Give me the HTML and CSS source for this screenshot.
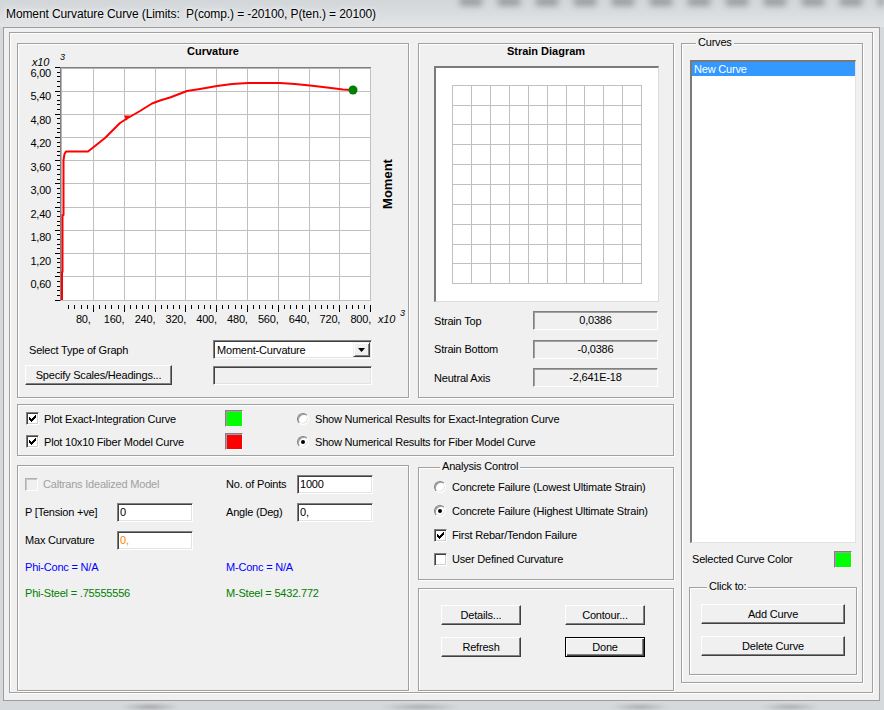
FILE: index.html
```html
<!DOCTYPE html>
<html>
<head>
<meta charset="utf-8">
<title>Moment Curvature Curve</title>
<link rel="stylesheet" href="styles.css">
</head>
<body>
<div class="titlebar"><span class="title-text">Moment Curvature Curve (Limits:  P(comp.) = -20100, P(ten.) = 20100)</span></div>
<div class="window">
  <div class="frame">
    <div class="leftcol">
      <div class="row1">
        <section class="panel curv">
          <div class="ptitle">Curvature</div>
          <svg class="chart" width="390" height="274" viewBox="18 59 390 274">
            <rect x="60" y="67" width="311" height="234" fill="#fff"/>
            <path d="M93.5 68V301M124.5 68V301M155.5 68V301M185.5 68V301M216.5 68V301M247.5 68V301M278.5 68V301M309.5 68V301M339.5 68V301M60 91.5H371M60 114.5H371M60 137.5H371M60 160.5H371M60 183.5H371M60 207.5H371M60 230.5H371M60 253.5H371M60 276.5H371M370.5 67V301M60 300.5H371" stroke="#c0c0c0" stroke-width="1" fill="none"/>
            <path d="M60 67.5H371M60.5 67V301" stroke="#808080" stroke-width="1" fill="none"/>
            <path d="M61 68.5H370M61.5 68V300" stroke="#b4b4b4" stroke-width="1" fill="none"/>
            <path d="M57 295.5h3M57 290.5h3M57 286.5h3M57 281.5h3M57 272.5h3M57 267.5h3M57 262.5h3M57 258.5h3M57 248.5h3M57 244.5h3M57 239.5h3M57 234.5h3M57 225.5h3M57 221.5h3M57 216.5h3M57 211.5h3M57 202.5h3M57 197.5h3M57 193.5h3M57 188.5h3M57 179.5h3M57 174.5h3M57 169.5h3M57 165.5h3M57 155.5h3M57 151.5h3M57 146.5h3M57 142.5h3M57 132.5h3M57 128.5h3M57 123.5h3M57 118.5h3M57 109.5h3M57 104.5h3M57 100.5h3M57 95.5h3M57 86.5h3M57 81.5h3M57 76.5h3M57 72.5h3M55 276.5h5M55 253.5h5M55 230.5h5M55 207.5h5M55 183.5h5M55 160.5h5M55 137.5h5M55 114.5h5M55 91.5h5M55 67.5h5M55 300.5h5" stroke="#000" stroke-width="1" fill="none"/>
            <path d="M68.5 305v4M74.5 305v4M81.5 305v4M87.5 305v4M99.5 305v4M105.5 305v4M111.5 305v4M118.5 305v4M130.5 305v4M136.5 305v4M142.5 305v4M148.5 305v4M161.5 305v4M167.5 305v4M173.5 305v4M179.5 305v4M191.5 305v4M198.5 305v4M204.5 305v4M210.5 305v4M222.5 305v4M228.5 305v4M235.5 305v4M241.5 305v4M253.5 305v4M259.5 305v4M265.5 305v4M272.5 305v4M284.5 305v4M290.5 305v4M296.5 305v4M302.5 305v4M315.5 305v4M321.5 305v4M327.5 305v4M333.5 305v4M346.5 305v4M352.5 305v4M358.5 305v4M364.5 305v4M93.5 305v7M124.5 305v7M155.5 305v7M185.5 305v7M216.5 305v7M247.5 305v7M278.5 305v7M309.5 305v7M339.5 305v7M370.5 305v7" stroke="#000" stroke-width="1" fill="none"/>
            <g class="ylab" text-anchor="end">
              <text x="51" y="77">6,00</text>
              <text x="51" y="100">5,40</text>
              <text x="51" y="124">4,80</text>
              <text x="51" y="147">4,20</text>
              <text x="51" y="171">3,60</text>
              <text x="51" y="194">3,00</text>
              <text x="51" y="218">2,40</text>
              <text x="51" y="241">1,80</text>
              <text x="51" y="265">1,20</text>
              <text x="51" y="288">0,60</text>
            </g>
            <g class="xlab" text-anchor="middle">
              <text x="83.3" y="323">80,</text>
              <text x="114.1" y="323">160,</text>
              <text x="145" y="323">240,</text>
              <text x="175.8" y="323">320,</text>
              <text x="206.6" y="323">400,</text>
              <text x="237.4" y="323">480,</text>
              <text x="268.2" y="323">560,</text>
              <text x="299.1" y="323">640,</text>
              <text x="329.9" y="323">720,</text>
              <text x="360.7" y="323">800,</text>
            </g>
            <text class="exp" x="32" y="66">x10</text>
            <text class="exp sup" x="60" y="60">3</text>
            <text class="exp" x="378" y="323">x10</text>
            <text class="exp sup" x="400" y="316">3</text>
            <text class="axis-title" x="392" y="184" text-anchor="middle" transform="rotate(-90 392 184)">Moment</text>
            <polyline points="62,300 62,272 62.5,272 62.5,215 63.5,215 63.5,160 64.5,154 66,151.5 88,151.5 95,146 105,138 113,130 120,123 127,118.5 140,111 152,103.5 160,100.5 170,97.5 187,91 200,89 217,86 232,84 248,83 280,83 295,84 310,85.5 327,87.5 343,89.5 352,90" fill="none" stroke="#ff0000" stroke-width="2" stroke-linejoin="round"/>
            <polygon points="124,115.5 130,115.5 126.5,120.5" fill="#ff0000"/>
            <circle cx="353" cy="90" r="4.5" fill="#008000"/>
          </svg>
          <div class="selrow">
            <span class="sel-label">Select Type of Graph</span>
            <div class="combo"><span class="combo-text">Moment-Curvature</span><span class="combo-btn"><svg width="7" height="4" viewBox="0 0 7 4"><path d="M0 0H7L3.5 4Z" fill="#000"/></svg></span></div>
          </div>
          <div class="scalerow">
            <button class="btn scale-btn">Specify Scales/Headings...</button>
            <div class="edit disabled"></div>
          </div>
        </section>
        <section class="panel strain">
          <div class="ptitle">Strain Diagram</div>
          <div class="strain-box">
            <svg width="222" height="233" viewBox="436 68 222 233">
              <path d="M452.5 85V284M471.5 85V284M490.5 85V284M509.5 85V284M528.5 85V284M547.5 85V284M566.5 85V284M584.5 85V284M603.5 85V284M622.5 85V284M641.5 85V284M452 85.5H642M452 105.5H642M452 124.5H642M452 144.5H642M452 164.5H642M452 184.5H642M452 204.5H642M452 224.5H642M452 244.5H642M452 263.5H642M452 283.5H642" stroke="#c0c0c0" stroke-width="1" fill="none"/>
            </svg>
          </div>
          <div class="srow first"><span class="slabel">Strain Top</span><div class="valbox">0,0386</div></div>
          <div class="srow"><span class="slabel">Strain Bottom</span><div class="valbox">-0,0386</div></div>
          <div class="srow"><span class="slabel">Neutral Axis</span><div class="valbox">-2,641E-18</div></div>
        </section>
      </div>
      <section class="panel plotopts">
        <label class="opt"><span class="cb"><svg width="7" height="7" viewBox="0 0 7 7"><path d="M0 2H1V3H2V4H3V3H4V2H5V1H6V0H7V3H6V4H5V5H4V6H3V7H2V6H1V5H0Z" fill="#000"/></svg></span><span>Plot Exact-Integration Curve</span></label>
        <span class="swatch sw-green"></span>
        <label class="opt"><span class="rb"></span><span>Show Numerical Results for Exact-Integration Curve</span></label>
        <label class="opt"><span class="cb"><svg width="7" height="7" viewBox="0 0 7 7"><path d="M0 2H1V3H2V4H3V3H4V2H5V1H6V0H7V3H6V4H5V5H4V6H3V7H2V6H1V5H0Z" fill="#000"/></svg></span><span>Plot 10x10 Fiber Model Curve</span></label>
        <span class="swatch sw-red"></span>
        <label class="opt"><span class="rb on"></span><span>Show Numerical Results for Fiber Model Curve</span></label>
      </section>
      <div class="row3">
        <section class="panel params">
          <label class="opt span3 dis-text"><span class="cb dis"></span><span>Caltrans Idealized Model</span></label>
          <span>No. of Points</span>
          <input class="edit" type="text" value="1000">
          <span>P [Tension +ve]</span>
          <input class="edit" type="text" value="0">
          <span></span>
          <span>Angle (Deg)</span>
          <input class="edit" type="text" value="0,">
          <span>Max Curvature</span>
          <input class="edit orange" type="text" value="0,">
          <span class="span3"></span>
          <span class="blue span3">Phi-Conc = N/A</span>
          <span class="blue span2">M-Conc = N/A</span>
          <span class="green span3">Phi-Steel = .75555556</span>
          <span class="green span2">M-Steel = 5432.772</span>
        </section>
        <div class="rcol">
          <div class="group analysis">
            <div class="cap">Analysis Control</div>
            <label class="aitem first"><span class="rb"></span><span>Concrete Failure (Lowest Ultimate Strain)</span></label>
            <label class="aitem"><span class="rb on"></span><span>Concrete Failure (Highest Ultimate Strain)</span></label>
            <label class="aitem"><span class="cb"><svg width="7" height="7" viewBox="0 0 7 7"><path d="M0 2H1V3H2V4H3V3H4V2H5V1H6V0H7V3H6V4H5V5H4V6H3V7H2V6H1V5H0Z" fill="#000"/></svg></span><span>First Rebar/Tendon Failure</span></label>
            <label class="aitem"><span class="cb"></span><span>User Defined Curvature</span></label>
          </div>
          <section class="panel buttons">
            <button class="btn">Details...</button>
            <button class="btn">Contour...</button>
            <button class="btn">Refresh</button>
            <button class="btn default">Done</button>
          </section>
        </div>
      </div>
    </div>
    <div class="group curves">
      <div class="cap">Curves</div>
      <div class="listbox"><div class="sel-item">New Curve</div></div>
      <div class="colorrow"><span>Selected Curve Color</span><span class="swatch sw-green"></span></div>
      <div class="group clickgroup">
        <div class="cap">Click to:</div>
        <button class="btn wide first">Add Curve</button>
        <button class="btn wide">Delete Curve</button>
      </div>
    </div>
  </div>
</div>
</body>
</html>
```
FILE: styles.css
```css
* { box-sizing: border-box; }
html, body { margin: 0; }
body {
  width: 884px;
  height: 710px;
  overflow: hidden;
  position: relative;
  background: #d6d9dc;
  font-family: "Liberation Sans", Arial, sans-serif;
  font-size: 11px;
  letter-spacing: -0.2px;
  color: #000;
}
body::after {
  content: "";
  position: absolute;
  left: 0;
  right: 0;
  top: 702px;
  height: 8px;
  background:
    radial-gradient(ellipse 30px 4px at 150px 5px, rgba(60,60,60,.35), transparent),
    radial-gradient(ellipse 40px 4px at 420px 5px, rgba(60,60,60,.3), transparent),
    radial-gradient(ellipse 30px 4px at 640px 5px, rgba(60,60,60,.3), transparent),
    radial-gradient(ellipse 30px 4px at 790px 5px, rgba(60,60,60,.3), transparent);
  filter: blur(1.5px);
}
.titlebar {
  height: 27px;
  display: flex;
  align-items: center;
  padding-left: 6px;
  background: linear-gradient(#d2d6d9, #e2e4e6);
  position: relative;
  overflow: hidden;
}
.titlebar::before {
  content: "";
  position: absolute;
  left: 460px;
  right: 0;
  top: -3px;
  height: 9px;
  background: repeating-linear-gradient(90deg, rgba(70,70,70,.4) 0 22px, transparent 22px 38px);
  filter: blur(3px);
}
.title-text {
  position: relative;
  font-size: 12px;
  letter-spacing: -0.1px;
  white-space: pre;
  text-shadow: 0 0 7px rgba(255,255,255,.95), 0 0 3px rgba(255,255,255,.8);
}
.window {
  margin-left: 3px;
  width: 877px;
  height: 674px;
  border: 1px solid #9d9d9d;
  background: #f0f0f0;
  padding: 4px 0 0 5px;
}
.frame {
  width: 864px;
  height: 661px;
  border: 1px solid #a0a0a0;
  box-shadow: inset 1px 1px 0 #fff, 1px 1px 0 #fff;
  display: flex;
  gap: 7px;
  padding: 10px 0 0 7px;
}
.leftcol {
  width: 657px;
  display: flex;
  flex-direction: column;
}
.row1 {
  display: flex;
  gap: 9px;
  height: 355px;
}
.panel {
  border: 1px solid #a0a0a0;
  box-shadow: 1px 1px 0 #fff, inset 1px 1px 0 #fff;
  background: #f0f0f0;
  overflow: hidden;
}
.group {
  border: 1px solid #a0a0a0;
  box-shadow: 1px 1px 0 #fff, inset 1px 1px 0 #fff;
}
.cap {
  width: max-content;
  height: 13px;
  line-height: 13px;
  margin: -8px 0 0 6px;
  padding: 0 2px;
  background: #f0f0f0;
}
.curv { width: 392px; }
.strain { width: 256px; }
.ptitle {
  height: 15px;
  line-height: 15px;
  text-align: center;
  font-weight: bold;
  letter-spacing: 0;
}
.chart { display: block; overflow: visible; }
.chart text { font-size: 11px; }
.chart .exp { font-style: italic; font-size: 11px; }
.chart .sup { font-size: 9px; }
.chart .axis-title { font-weight: bold; font-size: 13px; letter-spacing: 0; }
.selrow, .scalerow {
  display: grid;
  grid-template-columns: 195px 159px;
  align-items: center;
}
.selrow { height: 19px; margin-top: 7px; }
.scalerow { height: 20px; margin-top: 6px; }
.sel-label { padding-left: 11px; }
.combo {
  height: 19px;
  background: #fff;
  border: 1px solid;
  border-color: #808080 #fff #fff #808080;
  box-shadow: inset 1px 1px 0 #404040, inset -1px -1px 0 #e3e3e3;
  display: flex;
  align-items: center;
  padding: 0 1px 0 3px;
}
.combo-text { flex: 1; }
.combo-btn {
  width: 17px;
  height: 15px;
  background: #f0f0f0;
  border: 1px solid;
  border-color: #f0f0f0 #404040 #404040 #f0f0f0;
  box-shadow: inset 1px 1px 0 #fff, inset -1px -1px 0 #808080;
  display: flex;
  align-items: center;
  justify-content: center;
}
.combo-btn svg { display: block; }
.btn {
  font: inherit;
  letter-spacing: inherit;
  color: #000;
  background: #f0f0f0;
  border: 1px solid;
  border-color: #fff #404040 #404040 #fff;
  box-shadow: inset -1px -1px 0 #808080;
  padding: 0;
  height: 20px;
  border-radius: 0;
}
.btn.default {
  border-color: #000;
  box-shadow: inset 1px 1px 0 #fff, inset -1px -1px 0 #404040, inset -2px -2px 0 #808080;
}
.scale-btn { margin-left: 7px; width: 147px; }
.edit {
  font: inherit;
  letter-spacing: inherit;
  color: #000;
  height: 19px;
  width: 76px;
  padding: 0 0 0 2px;
  margin: 0;
  border: 1px solid;
  border-color: #808080 #fff #fff #808080;
  box-shadow: inset 1px 1px 0 #404040, inset -1px -1px 0 #e3e3e3;
  background: #fff;
  outline: none;
}
.edit.disabled { width: 159px; background: #f0f0f0; }
.edit.orange { color: #ff8000; }
.strain-box {
  margin: 7px 0 0 15px;
  width: 225px;
  height: 236px;
  border-style: solid;
  border-width: 2px 1px 1px 2px;
  border-color: #7a7a7a #dcdcdc #dcdcdc #7a7a7a;
  background: #fff;
}
.strain-box svg { display: block; }
.srow {
  display: flex;
  align-items: center;
  height: 19px;
  margin: 9.5px 0 0 15px;
}
.srow.first { margin-top: 9px; }
.slabel { width: 99px; }
.valbox {
  width: 125px;
  height: 19px;
  line-height: 16px;
  text-align: center;
  border: 1px solid;
  border-color: #808080 #fff #fff #808080;
  box-shadow: inset 1px 1px 0 #a0a0a0;
  background: #f0f0f0;
}
.plotopts {
  height: 52px;
  margin-top: 6px;
  display: grid;
  grid-template-columns: 199px 72px 1fr;
  grid-auto-rows: 23px;
  align-items: center;
  padding: 2px 0 0 8px;
}
.opt { display: flex; align-items: center; }
.cb {
  flex: none;
  width: 13px;
  height: 13px;
  margin-right: 5px;
  background: #fff;
  border: 1px solid;
  border-color: #808080 #fff #fff #808080;
  box-shadow: inset 1px 1px 0 #404040, inset -1px -1px 0 #d4d0c8;
  display: flex;
  align-items: center;
  justify-content: center;
}
.cb svg { display: block; }
.cb.dis {
  background: #f0f0f0;
  border-color: #b0b0b0 #fff #fff #b0b0b0;
  box-shadow: inset 1px 1px 0 #c8c8c8;
}
.rb {
  flex: none;
  width: 12px;
  height: 12px;
  margin-right: 6px;
  border-radius: 50%;
  background: #fff;
  border: 1px solid;
  border-color: #808080 #fff #fff #808080;
  box-shadow: inset 1px 1px 0 #a0a0a0, inset -1px -1px 0 #e3e3e3;
  display: flex;
  align-items: center;
  justify-content: center;
}
.rb.on::after {
  content: "";
  width: 4px;
  height: 4px;
  border-radius: 50%;
  background: #000;
}
.swatch {
  width: 18px;
  height: 17px;
  border: 1px solid;
  border-color: #808080 #fff #fff #808080;
  box-shadow: inset 1px 1px 0 #a0a0a0;
}
.sw-green { background-color: #00ff00; }
.sw-red { background-color: #ff0000; }
.row3 {
  display: flex;
  gap: 9px;
  margin-top: 5px;
  height: 230px;
}
.params {
  width: 392px;
  height: 226px;
  margin-top: 4px;
  display: grid;
  grid-template-columns: 92px 76px 33px 71px 76px;
  grid-template-rows: 28px 28px 28px 26px 26px;
  align-items: center;
  align-content: start;
  padding: 4px 0 0 7px;
}
.span3 { grid-column: span 3; }
.span2 { grid-column: span 2; }
.dis-text { color: #a0a0a0; }
.blue { color: #0000ff; }
.green { color: #008000; }
.rcol {
  width: 256px;
  display: flex;
  flex-direction: column;
}
.analysis {
  margin-top: 6px;
  height: 113px;
  padding-left: 15px;
}
.aitem {
  display: flex;
  align-items: center;
  height: 24px;
}
.aitem.first { margin-top: 2px; }
.buttons {
  margin-top: 8px;
  height: 103px;
  display: grid;
  grid-template-columns: 80px 80px;
  grid-auto-rows: 20px;
  column-gap: 44px;
  row-gap: 12px;
  align-content: start;
  padding: 16px 0 0 22px;
}
.curves {
  width: 182px;
  height: 640px;
  padding-left: 8px;
}
.listbox {
  margin-top: 11px;
  width: 166px;
  height: 483px;
  border-style: solid;
  border-width: 2px 1px 1px 2px;
  border-color: #7a7a7a #e3e3e3 #e3e3e3 #7a7a7a;
  background: #fff;
}
.sel-item {
  height: 14px;
  line-height: 14px;
  background: #3399ff;
  color: #fff;
  padding-left: 2px;
}
.colorrow {
  display: flex;
  align-items: center;
  justify-content: space-between;
  width: 162px;
  height: 18px;
  margin-top: 7px;
  padding-left: 2px;
}
.clickgroup {
  width: 168px;
  height: 88px;
  margin: 19px 0 0 -1px;
  padding-left: 11px;
  display: flex;
  flex-direction: column;
}
.btn.wide { width: 144px; margin-top: 12px; }
.btn.wide.first { margin-top: 11px; }
```
